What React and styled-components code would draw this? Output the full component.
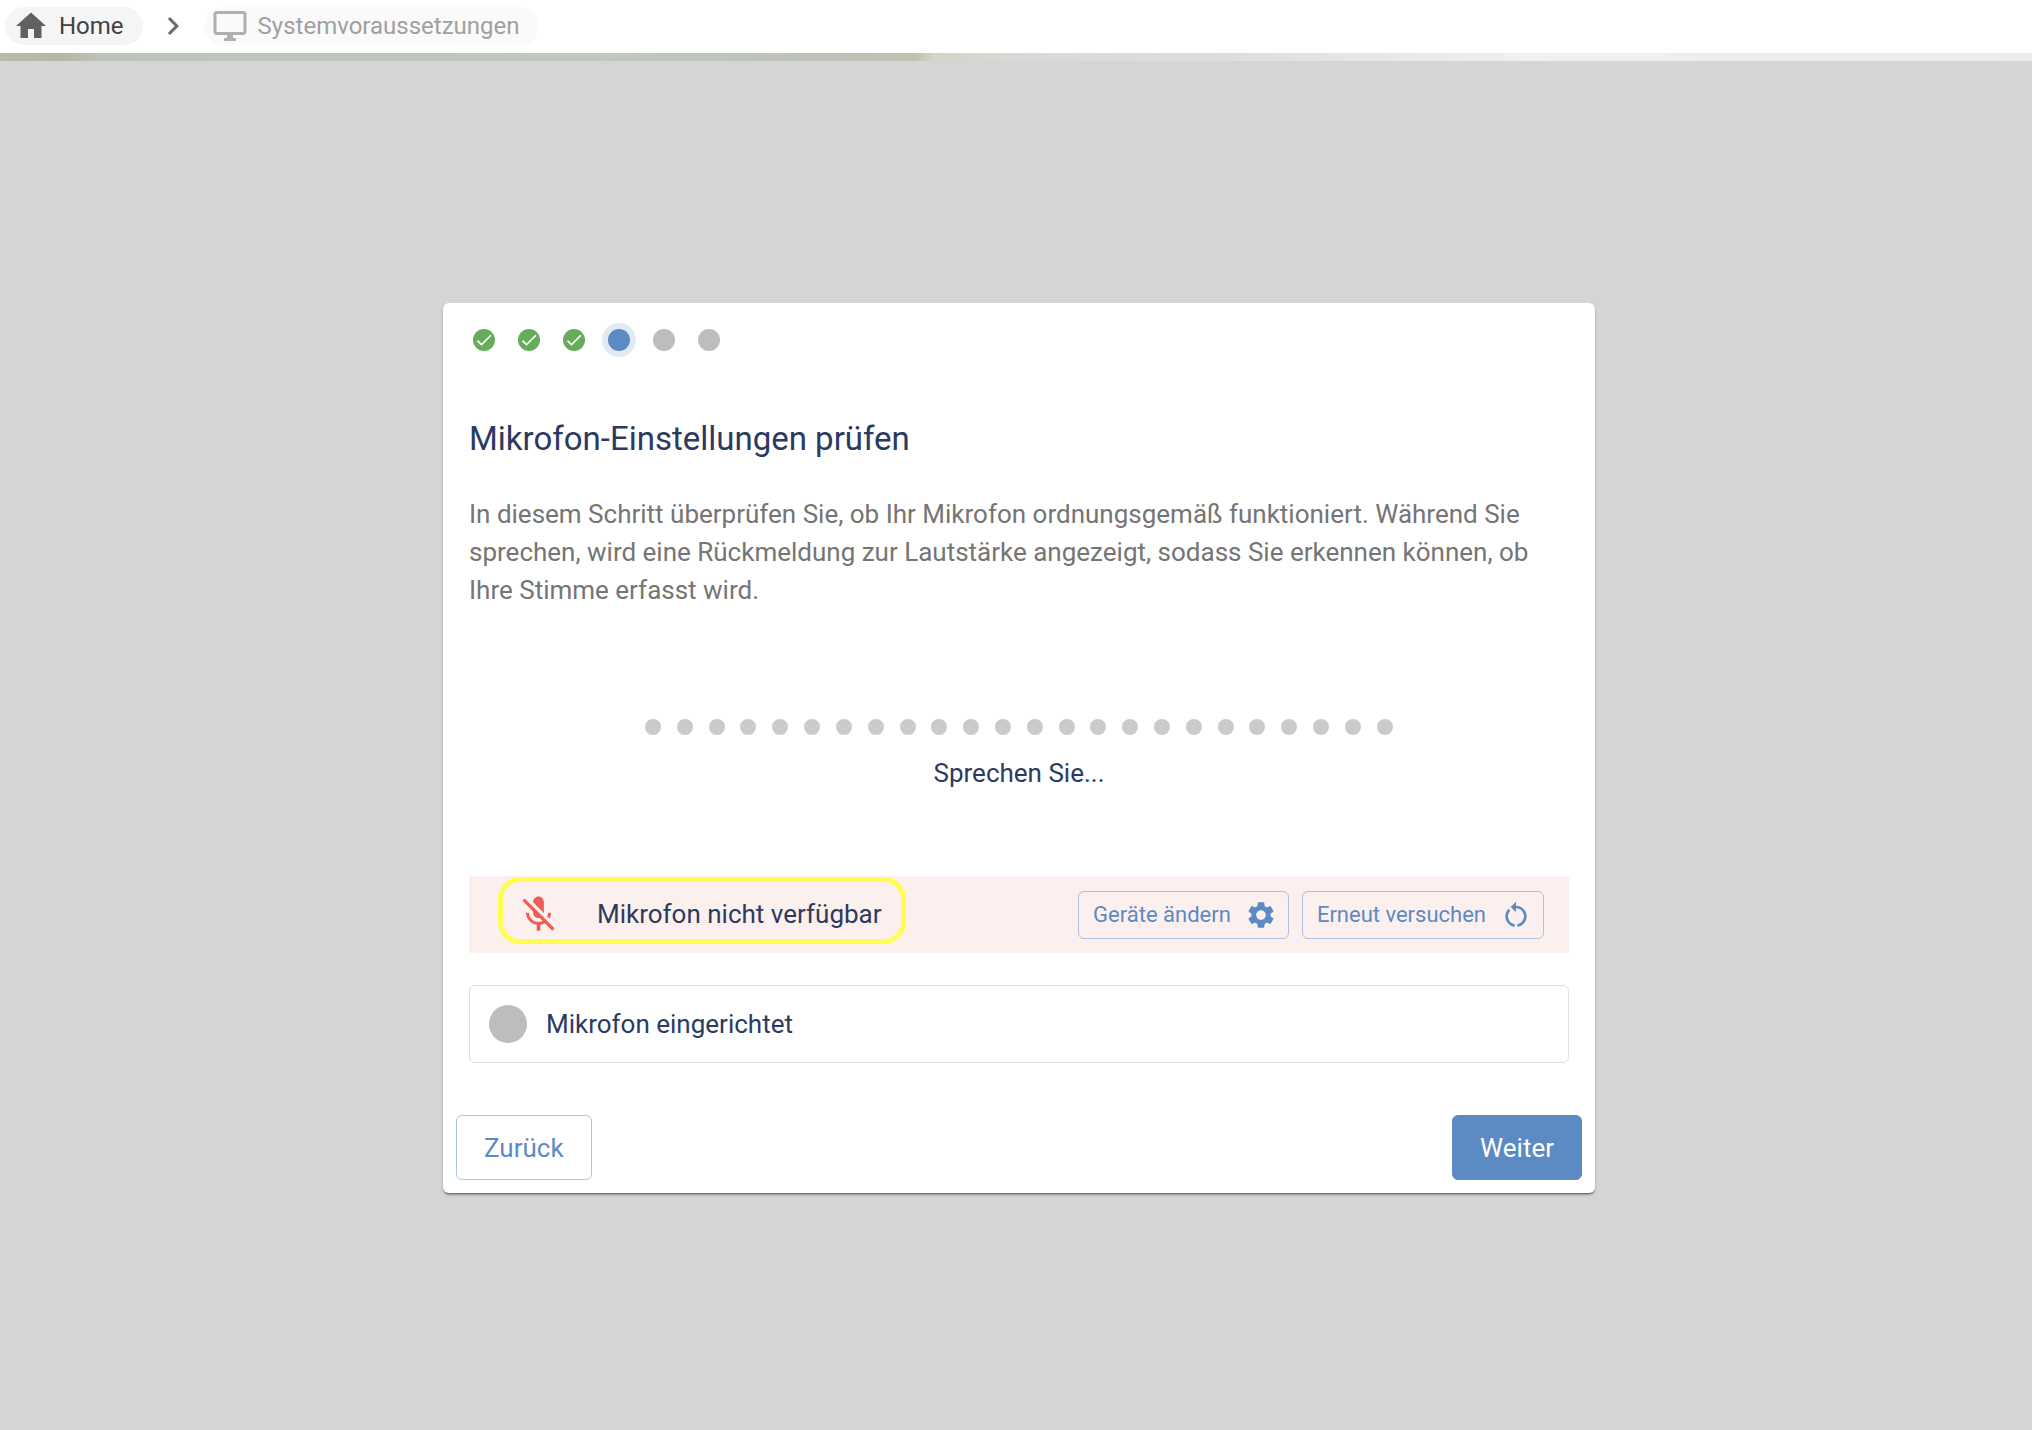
import { Fragment } from 'react';
import styled, { createGlobalStyle, css } from 'styled-components';
import {
  MdCheck,
  MdChevronRight,
  MdHome,
  MdMicOff,
  MdOutlineDesktopWindows,
  MdRestartAlt,
  MdSettings,
} from 'react-icons/md';

const colors = {
  primary: '#5c8ac2',
  primaryBorder: '#adc3e0',
  navy: '#2c3a5f',
  grey: '#bdbdbd',
  success: '#66ac5b',
  error: '#ec5f59',
};

const GlobalStyle = createGlobalStyle`
  * {
    box-sizing: border-box;
  }

  body {
    margin: 0;
    background-color: #d5d5d5;
    font-family: Roboto, 'Liberation Sans', sans-serif;
    font-size: 26px;
    color: ${colors.navy};
  }
`;

const Page = styled.div`
  display: flex;
  flex-direction: column;
  min-height: 100vh;
`;

const TopBar = styled.nav`
  display: flex;
  align-items: center;
  height: 53px;
  padding: 0 5px 2px;
  background-color: white;
`;

const Separator = styled.span`
  display: flex;
  margin: 0 13px 0 12px;
  color: #6b6b6b;
`;

const Crumb = styled.a`
  display: flex;
  align-items: center;
  gap: 10px;
  height: 38px;
  padding: 0 19px 0 8px;
  border-radius: 19px;
  background-color: ${({ $current }) => ($current ? '#fafafa' : '#f5f5f5')};
  color: ${({ $current }) => ($current ? '#a0a0a0' : '#424242')};
  font-size: 24px;
  text-decoration: none;

  svg {
    color: ${({ $current }) => ($current ? '#b0b0b0' : '#616161')};
  }
`;

/* narrow piece of the blurred room picture behind the content */
const Backdrop = styled.div`
  height: 8px;
  background: linear-gradient(
    to right,
    #b9bbac 0%,
    #b6b6a6 3%,
    #bdc4ba 5%,
    #c1c8c0 30%,
    #bcc2b8 41%,
    #c0c1b1 45%,
    #d3d5ca 46%,
    #d8dad5 50%,
    #dcdedc 60%,
    #f0f0f0 75%,
    #ececec 100%
  );
`;

const Main = styled.main`
  display: flex;
  flex: 1;
  align-items: center;
  justify-content: center;
  padding: 5px 0 0 6px;
`;

const Card = styled.section`
  width: 1152px;
  max-width: 100%;
  border-radius: 6px;
  background-color: white;
  box-shadow: 0 3px 2px -2px rgba(0, 0, 0, 0.4), 0 2px 3px rgba(0, 0, 0, 0.25);
`;

const CardBody = styled.div`
  display: flex;
  flex-direction: column;
  padding: 26px 26px 0;
`;

const Steps = styled.ol`
  display: flex;
  gap: 23px;
  margin: 0;
  padding: 0 4px;
  list-style: none;
`;

const Step = styled.li`
  display: flex;
  align-items: center;
  justify-content: center;
  width: 22px;
  height: 22px;
  border-radius: 50%;
  color: white;
  background-color: ${colors.grey};

  ${({ $state }) =>
    $state === 'done' &&
    css`
      background-color: ${colors.success};
    `}

  ${({ $state }) =>
    $state === 'active' &&
    css`
      background-color: ${colors.primary};
      box-shadow: 0 0 0 6px #e1e9f4;
    `}
`;

const Title = styled.h1`
  margin: 68px 0 0;
  font-size: 33px;
  font-weight: 400;
  line-height: 40px;
`;

const Description = styled.p`
  margin: 36px 0 0;
  color: #757575;
  line-height: 38px;
`;

const Meter = styled.div`
  display: flex;
  align-self: center;
  justify-content: space-between;
  width: 748px;
  max-width: 100%;
  margin-top: 110px;
`;

const MeterDot = styled.span`
  width: 16px;
  height: 16px;
  border-radius: 50%;
  background-color: #cacaca;
`;

const MeterLabel = styled.p`
  margin: 19px 0 0;
  line-height: 38px;
  text-align: center;
`;

const Alert = styled.div`
  display: flex;
  align-items: center;
  justify-content: space-between;
  height: 77px;
  margin-top: 84px;
  padding: 0 25px 0 29px;
  background-color: #fcf0ee;
`;

const Highlight = styled.div`
  display: flex;
  align-items: center;
  gap: 37px;
  height: 67px;
  padding: 7px 19px 0 14px;
  margin-bottom: 8px;
  border: 5px solid #fffd54;
  border-radius: 22px;

  svg {
    color: ${colors.error};
  }
`;

const Actions = styled.div`
  display: flex;
  gap: 13px;
`;

const Button = styled.button`
  display: flex;
  align-items: center;
  justify-content: center;
  height: 65px;
  padding: 0 27px;
  border: 1px solid ${colors.primaryBorder};
  border-radius: 6px;
  background-color: ${({ $filled }) => ($filled ? colors.primary : 'transparent')};
  color: ${({ $filled }) => ($filled ? 'white' : colors.primary)};
  font-family: inherit;
  font-size: 26px;
  cursor: pointer;

  ${({ $filled }) => $filled && css`
    border-color: ${colors.primary};
  `}
`;

const SmallButton = styled(Button)`
  gap: 14px;
  height: 48px;
  padding: 0 11px 0 14px;
  font-size: 22px;
`;

const Status = styled.div`
  display: flex;
  align-items: center;
  gap: 19px;
  height: 78px;
  margin-top: 32px;
  padding: 0 19px;
  border: 1px solid #e0e0e0;
  border-radius: 6px;
`;

const StatusDot = styled.span`
  width: 38px;
  height: 38px;
  border-radius: 50%;
  background-color: ${colors.grey};
`;

const CardFooter = styled.footer`
  display: flex;
  justify-content: space-between;
  padding: 52px 13px 13px;
`;

const crumbs = [
  { label: 'Home', icon: MdHome },
  { label: 'Systemvoraussetzungen', icon: MdOutlineDesktopWindows, current: true },
];

const steps = ['done', 'done', 'done', 'active', 'open', 'open'];

const METER_DOTS = 24;

function Breadcrumbs() {
  return (
    <TopBar>
      {crumbs.map(({ label, icon: Icon, current }, i) => (
        <Fragment key={label}>
          {i > 0 && (
            <Separator>
              <MdChevronRight size={36} />
            </Separator>
          )}
          <Crumb href="#" $current={current}>
            <Icon size={36} />
            {label}
          </Crumb>
        </Fragment>
      ))}
    </TopBar>
  );
}

function VolumeMeter() {
  return (
    <Meter>
      {Array.from({ length: METER_DOTS }, (_, i) => (
        <MeterDot key={i} />
      ))}
    </Meter>
  );
}

function App() {
  return (
    <Page>
      <GlobalStyle />
      <Breadcrumbs />
      <Backdrop />
      <Main>
        <Card>
          <CardBody>
            <Steps>
              {steps.map((state, i) => (
                <Step key={i} $state={state}>
                  {state === 'done' && <MdCheck size={20} />}
                </Step>
              ))}
            </Steps>
            <Title>Mikrofon-Einstellungen prüfen</Title>
            <Description>
              In diesem Schritt überprüfen Sie, ob Ihr Mikrofon ordnungsgemäß funktioniert. Während Sie
              sprechen, wird eine Rückmeldung zur Lautstärke angezeigt, sodass Sie erkennen können, ob
              Ihre Stimme erfasst wird.
            </Description>
            <VolumeMeter />
            <MeterLabel>Sprechen Sie...</MeterLabel>
            <Alert>
              <Highlight>
                <MdMicOff size={43} />
                Mikrofon nicht verfügbar
              </Highlight>
              <Actions>
                <SmallButton type="button">
                  Geräte ändern
                  <MdSettings size={32} />
                </SmallButton>
                <SmallButton type="button">
                  Erneut versuchen
                  <MdRestartAlt size={32} />
                </SmallButton>
              </Actions>
            </Alert>
            <Status>
              <StatusDot />
              Mikrofon eingerichtet
            </Status>
          </CardBody>
          <CardFooter>
            <Button type="button">Zurück</Button>
            <Button type="button" $filled>Weiter</Button>
          </CardFooter>
        </Card>
      </Main>
    </Page>
  );
}

export default App;
